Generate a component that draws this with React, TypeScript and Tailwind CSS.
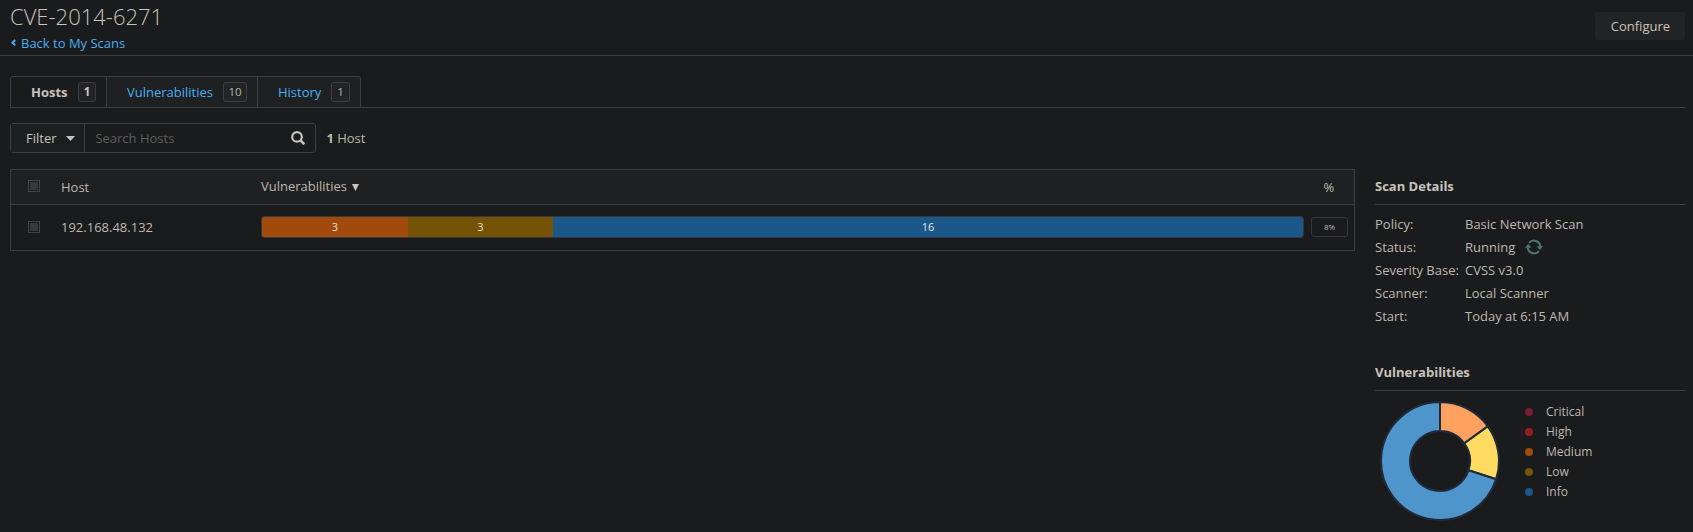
import React from 'react';

const tabs = [
  { label: 'Hosts', count: 1, tab: 'w-[97px] pl-5 bg-[#1a1b1c] border-l border-b font-bold text-[#c8c3bc] rounded-tl-[3px]', badge: 'left-[67px] w-[18px]' },
  { label: 'Vulnerabilities', count: 10, tab: 'w-[151px] pl-5 bg-[#1f2021] border-b text-[#48aef0]', badge: 'left-[116px] w-6 text-[#b9b4ab]' },
  { label: 'History', count: 1, tab: 'w-[103px] pl-5 bg-[#1f2021] border-b text-[#48aef0] rounded-tr-[3px]', badge: 'left-[73px] w-[19px] text-[#b9b4ab]' },
];

const details = [
  ['Policy:', 'Basic Network Scan'],
  ['Status:', 'Running'],
  ['Severity Base:', 'CVSS v3.0'],
  ['Scanner:', 'Local Scanner'],
  ['Start:', 'Today at 6:15 AM'],
];

const legend = [
  { label: 'Critical', dot: 'bg-[#7a1c36]' },
  { label: 'High', dot: 'bg-[#981b20]' },
  { label: 'Medium', dot: 'bg-[#a04a0c]' },
  { label: 'Low', dot: 'bg-[#745306]' },
  { label: 'Info', dot: 'bg-[#1b5889]' },
];

function Checkbox() {
  return (
    <span className="flex size-3 items-center justify-center border border-[#404445]">
      <span className="size-2 bg-[#35393b]" />
    </span>
  );
}

function slice(from: number, to: number, outer = 59, inner = 30) {
  const at = (f: number, r: number) =>
    `${60 + r * Math.sin(f * 2 * Math.PI)} ${60 - r * Math.cos(f * 2 * Math.PI)}`;
  const large = to - from > 0.5 ? 1 : 0;
  return `M${at(from, outer)}A${outer} ${outer} 0 ${large} 1 ${at(to, outer)}L${at(to, inner)}A${inner} ${inner} 0 ${large} 0 ${at(from, inner)}Z`;
}

function Donut() {
  return (
    <svg width="120" height="120" viewBox="0 0 120 120" stroke="#1f2b3a" strokeWidth="2">
      <path d={slice(0, 0.15)} fill="#ffa25f" />
      <path d={slice(0.15, 0.3)} fill="#ffdb61" />
      <path d={slice(0.3, 1)} fill="#4d95cb" />
    </svg>
  );
}

export default function App() {
  return (
    <div className="h-[532px] w-[1693px] overflow-hidden bg-[#1a1b1c] font-['Open_Sans','Noto_Sans',sans-serif] text-[13px] leading-5 text-[#bdb8af]">
      <header className="flex h-14 justify-between border-b border-[#3b3e40] pr-2 pl-[10px]">
        <div>
          <h1 className="mt-[2px] h-7 text-[22px] leading-7 font-light text-[#c8c3bc]">CVE-2014-6271</h1>
          <a className="mt-[3px] flex h-5 items-center text-[#48aef0]">
            <svg width="5" height="8" viewBox="0 0 5 8" className="mr-[5px] ml-px" fill="none" stroke="currentColor" strokeWidth="2">
              <path d="M4.2 1 L1.5 3.7 L4.2 6.4" />
            </svg>
            Back to My Scans
          </a>
        </div>
        <button className="mt-3 h-7 w-[90px] rounded-[3px] bg-[#222324] pl-px text-[#c8c3bc]">Configure</button>
      </header>

      <nav className="mt-5 mr-2 ml-[10px] flex h-8">
        {tabs.map((t) => (
          <div key={t.label} className={`relative flex items-center border-t border-r border-[#3b3e40] ${t.tab}`}>
            {t.label}
            <span className={`absolute top-[5px] flex h-5 items-center justify-center rounded-[3px] border border-[#3b3e40] bg-[#222324] text-[11.5px] ${t.badge}`}>
              {t.count}
            </span>
          </div>
        ))}
        <div className="flex-1 border-b border-[#3b3e40]" />
      </nav>

      <div className="mt-[15px] ml-[10px] flex h-[30px] items-center">
        <div className="flex h-[30px] w-[306px] items-center rounded-[3px] border border-[#3a4042]">
          <div className="flex h-7 w-[74px] items-center border-r border-[#3a4042] bg-[#1b1f20] pl-[15px] text-[#c8c3bc]">
            Filter
            <svg width="9" height="5" viewBox="0 0 9 5" className="ml-[9px]" fill="#c8c3bc">
              <path d="M0 0H9L4.5 5Z" />
            </svg>
          </div>
          <span className="flex-1 pl-[10.4px] text-[#5f5e5b]">Search Hosts</span>
          <svg width="14" height="14" viewBox="0 0 14 14" className="mr-[10px]" fill="none" stroke="#c8c3bc" strokeWidth="2.2">
            <circle cx="6" cy="5.9" r="4.8" />
            <path d="M9.2 9.1L13.3 13.2" strokeWidth="2.6" />
          </svg>
        </div>
        <span className="ml-[10.4px]"><b>1</b> Host</span>
      </div>

      <main className="mt-4 ml-[10px] flex">
        <section className="h-[82px] w-[1345px] border border-[#3b3e40]">
          <div className="flex h-[35px] items-center border-b border-[#3b3e40] bg-[#1f2021]">
            <div className="w-[50px] pb-[3px] pl-[17px]"><Checkbox /></div>
            <div className="w-[200px]">Host</div>
            <div className="flex flex-1 items-center pb-[2px]">
              Vulnerabilities
              <svg width="7" height="7" viewBox="0 0 7 7" className="mt-[2px] ml-[5px]" fill="#c8c3bc"><path d="M0 0H7L3.5 7Z" /></svg>
            </div>
            <div className="w-[30.5px]">%</div>
          </div>
          <div className="flex h-[45px] items-center pb-[2px]">
            <div className="w-[50px] pl-[17px]"><Checkbox /></div>
            <div className="w-[200px]">192.168.48.132</div>
            <div className="flex h-[22px] w-[1043px] overflow-hidden rounded-[3px] border border-[#34383a] text-[11px] text-[#e4e0da]">
              <div className="flex w-[146px] items-center justify-center bg-[#a04a0c]">3</div>
              <div className="flex w-[145px] items-center justify-center bg-[#745306]">3</div>
              <div className="flex flex-1 items-center justify-center bg-[#1b5889]">16</div>
            </div>
            <div className="ml-[7px] flex h-5 w-[37px] items-center justify-center rounded-[3px] border border-[#34383a] text-[8px]">8%</div>
          </div>
        </section>

        <aside className="ml-5 w-[310px]">
          <h2 className="h-9 border-b border-[#3b3e40] pt-[7px] font-bold text-[#c8c3bc]">Scan Details</h2>
          <dl className="mt-[7px]">
            {details.map(([name, value]) => (
              <div key={name} className="flex h-[23px] items-center">
                <dt className="w-[90px]">{name}</dt>
                <dd className="flex items-center whitespace-nowrap">
                  {value}
                  {name === 'Status:' && (
                    <svg width="18" height="16" viewBox="0 0 18 16" className="ml-[10px]" fill="none" stroke="#4c7772" strokeWidth="2">
                      <path d="M4.1 3.8A6.4 6.4 0 0 1 15.3 7.6M13.9 12.2A6.4 6.4 0 0 1 2.7 8.4" />
                      <path d="M11.6 7.2H18L14.8 11ZM0 8.8H6.4L3.2 5Z" fill="#4c7772" stroke="none" />
                    </svg>
                  )}
                </dd>
              </div>
            ))}
          </dl>
          <h2 className="mt-[35px] h-[29px] border-b border-[#3b3e40] font-bold text-[#c8c3bc]">Vulnerabilities</h2>
          <div className="flex pt-[10px] pl-[5px]">
            <Donut />
            <ul className="mt-px ml-[25px] text-[12px]">
              {legend.map((l) => (
                <li key={l.label} className="flex h-5 items-center">
                  <span className={`mr-[13px] size-2 rounded-full ${l.dot}`} />
                  {l.label}
                </li>
              ))}
            </ul>
          </div>
        </aside>
      </main>
    </div>
  );
}
